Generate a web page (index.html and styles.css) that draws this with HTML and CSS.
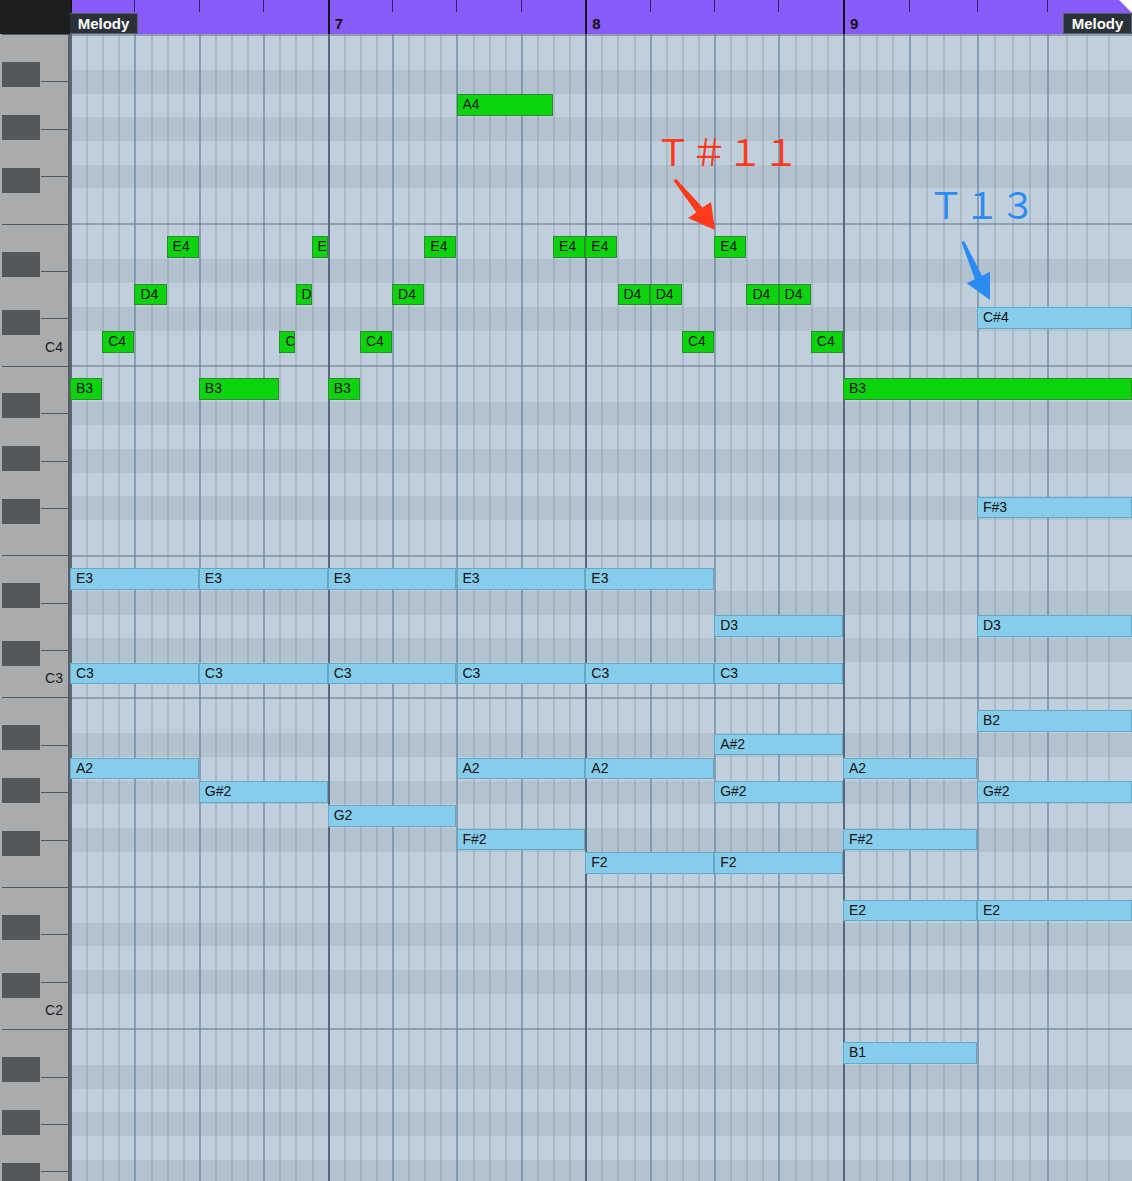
FILE: index.html
```html
<!DOCTYPE html>
<html lang="en">
<head>
    <meta charset="UTF-8">
    <title>Key Editor - Melody</title>
    <link rel="stylesheet" href="styles.css">
</head>
<body>
<div class="editor">
    <div class="corner"></div>

    <!-- ruler: one cell per beat -->
    <div class="ruler">
        <div class="rbeat bar"></div><div class="rbeat"></div><div class="rbeat"></div><div class="rbeat"></div>
        <div class="rbeat bar">7</div><div class="rbeat"></div><div class="rbeat"></div><div class="rbeat"></div>
        <div class="rbeat bar">8</div><div class="rbeat"></div><div class="rbeat"></div><div class="rbeat"></div>
        <div class="rbeat bar w66">9</div><div class="rbeat w68"></div><div class="rbeat w70"></div><div class="rbeat w85"></div>
        <span class="part-tag left">Melody</span>
        <span class="part-tag right">Melody</span>
    </div>

    <!-- keyboard -->
    <div class="keys">
        <div class="wkey full"><div class="bkey as"></div></div>
        <div class="wkey"><div class="bkey gs"></div></div>
        <div class="wkey"><div class="bkey fs"></div></div>
        <div class="wkey"></div>
        <div class="wkey full"><div class="bkey ds"></div></div>
        <div class="wkey"><div class="bkey cs"></div></div>
        <div class="wkey">C4</div>

        <div class="wkey full"><div class="bkey as"></div></div>
        <div class="wkey"><div class="bkey gs"></div></div>
        <div class="wkey"><div class="bkey fs"></div></div>
        <div class="wkey"></div>
        <div class="wkey full"><div class="bkey ds"></div></div>
        <div class="wkey"><div class="bkey cs"></div></div>
        <div class="wkey">C3</div>

        <div class="wkey full"><div class="bkey as"></div></div>
        <div class="wkey"><div class="bkey gs"></div></div>
        <div class="wkey"><div class="bkey fs"></div></div>
        <div class="wkey"></div>
        <div class="wkey full"><div class="bkey ds"></div></div>
        <div class="wkey"><div class="bkey cs"></div></div>
        <div class="wkey">C2</div>

        <div class="wkey full"><div class="bkey as"></div></div>
        <div class="wkey"><div class="bkey gs"></div></div>
        <div class="wkey"><div class="bkey fs"></div></div>
        <div class="wkey"></div>
    </div>

    <div class="grid">
        <div class="rows">
            <div class="row gap"></div><div class="row"></div><div class="row blk"></div><div class="row"></div><div class="row blk"></div><div class="row"></div><div class="row blk"></div><div class="row"></div>
            <div class="row gap"></div><div class="row"></div><div class="row blk"></div><div class="row"></div><div class="row blk"></div><div class="row"></div>
            <div class="row gap"></div><div class="row"></div><div class="row blk"></div><div class="row"></div><div class="row blk"></div><div class="row"></div><div class="row blk"></div><div class="row"></div>
            <div class="row gap"></div><div class="row"></div><div class="row blk"></div><div class="row"></div><div class="row blk"></div><div class="row"></div>
            <div class="row gap"></div><div class="row"></div><div class="row blk"></div><div class="row"></div><div class="row blk"></div><div class="row"></div><div class="row blk"></div><div class="row"></div>
            <div class="row gap"></div><div class="row"></div><div class="row blk"></div><div class="row"></div><div class="row blk"></div><div class="row"></div>
            <div class="row gap"></div><div class="row"></div><div class="row blk"></div><div class="row"></div><div class="row blk"></div><div class="row"></div><div class="row blk"></div>
        </div>

        <div class="cols">
            <div class="gbeat bar"><i></i><i></i><i></i><i></i></div><div class="gbeat"><i></i><i></i><i></i><i></i></div><div class="gbeat"><i></i><i></i><i></i><i></i></div><div class="gbeat"><i></i><i></i><i></i><i></i></div>
            <div class="gbeat bar"><i></i><i></i><i></i><i></i></div><div class="gbeat"><i></i><i></i><i></i><i></i></div><div class="gbeat"><i></i><i></i><i></i><i></i></div><div class="gbeat"><i></i><i></i><i></i><i></i></div>
            <div class="gbeat bar"><i></i><i></i><i></i><i></i></div><div class="gbeat"><i></i><i></i><i></i><i></i></div><div class="gbeat"><i></i><i></i><i></i><i></i></div><div class="gbeat"><i></i><i></i><i></i><i></i></div>
            <div class="gbeat bar w66"><i></i><i></i><i></i><i></i></div><div class="gbeat w68"><i></i><i></i><i></i><i></i></div><div class="gbeat w70"><i></i><i></i><i></i><i></i></div>
            <div class="gbeat w85"><i class="s19"></i><i class="s20"></i><i class="s22"></i><i class="s24"></i></div>
        </div>

        <div class="notes">
            <!-- melody -->
            <div class="note g" style="--r:3;left:386.5px;width:96.6px">A4</div>

            <div class="note g" style="--r:9;left:96.6px;width:32.2px">E4</div>
            <div class="note g" style="--r:9;left:241.6px;width:16.1px">E</div>
            <div class="note g" style="--r:9;left:354.3px;width:32.2px">E4</div>
            <div class="note g" style="--r:9;left:483.1px;width:32.2px">E4</div>
            <div class="note g" style="--r:9;left:515.3px;width:32.2px">E4</div>
            <div class="note g" style="--r:9;left:644.2px;width:32.2px">E4</div>

            <div class="note g" style="--r:11;left:64.4px;width:32.2px">D4</div>
            <div class="note g" style="--r:11;left:225.5px;width:16.1px">D</div>
            <div class="note g" style="--r:11;left:322.1px;width:32.2px">D4</div>
            <div class="note g" style="--r:11;left:547.5px;width:32.2px">D4</div>
            <div class="note g" style="--r:11;left:579.7px;width:32.2px">D4</div>
            <div class="note g" style="--r:11;left:676.4px;width:32.2px">D4</div>
            <div class="note g" style="--r:11;left:708.6px;width:32.2px">D4</div>

            <div class="note g" style="--r:13;left:32.2px;width:32.2px">C4</div>
            <div class="note g" style="--r:13;left:209.4px;width:16.1px">C</div>
            <div class="note g" style="--r:13;left:289.9px;width:32.2px">C4</div>
            <div class="note g" style="--r:13;left:612px;width:32.2px">C4</div>
            <div class="note g" style="--r:13;left:740.8px;width:32.2px">C4</div>

            <div class="note g" style="--r:15;left:0;width:32.2px">B3</div>
            <div class="note g" style="--r:15;left:128.8px;width:80.6px">B3</div>
            <div class="note g" style="--r:15;left:257.7px;width:32.2px">B3</div>
            <div class="note g" style="--r:15;left:773px;width:289px">B3</div>

            <!-- chords -->
            <div class="note b" style="--r:12;left:907px;width:155px">C#4</div>
            <div class="note b" style="--r:20;left:907px;width:155px">F#3</div>

            <div class="note b" style="--r:23;left:0;width:128.8px">E3</div>
            <div class="note b" style="--r:23;left:128.8px;width:128.9px">E3</div>
            <div class="note b" style="--r:23;left:257.7px;width:128.8px">E3</div>
            <div class="note b" style="--r:23;left:386.5px;width:128.8px">E3</div>
            <div class="note b" style="--r:23;left:515.3px;width:128.9px">E3</div>

            <div class="note b" style="--r:25;left:644.2px;width:128.8px">D3</div>
            <div class="note b" style="--r:25;left:907px;width:155px">D3</div>

            <div class="note b" style="--r:27;left:0;width:128.8px">C3</div>
            <div class="note b" style="--r:27;left:128.8px;width:128.9px">C3</div>
            <div class="note b" style="--r:27;left:257.7px;width:128.8px">C3</div>
            <div class="note b" style="--r:27;left:386.5px;width:128.8px">C3</div>
            <div class="note b" style="--r:27;left:515.3px;width:128.9px">C3</div>
            <div class="note b" style="--r:27;left:644.2px;width:128.8px">C3</div>

            <div class="note b" style="--r:29;left:907px;width:155px">B2</div>
            <div class="note b" style="--r:30;left:644.2px;width:128.8px">A#2</div>

            <div class="note b" style="--r:31;left:0;width:128.8px">A2</div>
            <div class="note b" style="--r:31;left:386.5px;width:128.8px">A2</div>
            <div class="note b" style="--r:31;left:515.3px;width:128.9px">A2</div>
            <div class="note b" style="--r:31;left:773px;width:134px">A2</div>

            <div class="note b" style="--r:32;left:128.8px;width:128.9px">G#2</div>
            <div class="note b" style="--r:32;left:644.2px;width:128.8px">G#2</div>
            <div class="note b" style="--r:32;left:907px;width:155px">G#2</div>

            <div class="note b" style="--r:33;left:257.7px;width:128.8px">G2</div>

            <div class="note b" style="--r:34;left:386.5px;width:128.8px">F#2</div>
            <div class="note b" style="--r:34;left:773px;width:134px">F#2</div>

            <div class="note b" style="--r:35;left:515.3px;width:128.9px">F2</div>
            <div class="note b" style="--r:35;left:644.2px;width:128.8px">F2</div>

            <div class="note b" style="--r:37;left:773px;width:134px">E2</div>
            <div class="note b" style="--r:37;left:907px;width:155px">E2</div>

            <div class="note b" style="--r:43;left:773px;width:134px">B1</div>
        </div>

        <!-- hand-drawn annotations -->
        <span class="mark red">Ｔ＃１１</span>
        <span class="mark blue">Ｔ１３</span>
        <svg class="arrows" width="1062" height="1147" viewBox="0 0 1062 1147">
            <path d="M606.2 145 L632.6 173.5 L641 168 L645 196 L618 184 L626.4 178.5 L603.8 147 Q604.5 145.2 606.2 145 Z" fill="#ff3a1c"/>
            <path d="M894.4 207.4 L912.1 241.8 L920 237.7 L920 266 L896.7 249.3 L904.9 245.2 L891.6 208.6 Q892.8 206.8 894.4 207.4 Z" fill="#2a8cf2"/>
        </svg>
    </div>
</div>
</body>
</html>
```

FILE: styles.css
```css
* {
    box-sizing: border-box;
}

body {
    margin: 0;
    overflow: hidden;
    background-color: #1c1e20;
    font-family: "Liberation Sans", Arial, sans-serif;
}

.editor {
    display: grid;
    grid-template-columns: 70px 1062px;
    grid-template-rows: 34px 1147px;
    width: 1132px;
    height: 1181px;
    overflow: hidden;
}

.corner {
    background-color: #1c1e20;
}

/* ruler */
.ruler {
    position: relative;
    display: flex;
    background-color: #885cfc;
    overflow: hidden;
}

.rbeat {
    flex: 0 0 64.42px;
    background: linear-gradient(#2e2560, #2e2560) no-repeat left top / 1px 12px;
}

.rbeat.bar {
    background: linear-gradient(#151515, #151515) no-repeat left top / 2px 100%;
    padding: 16px 0 0 7px;
    font-size: 15px;
    line-height: 15px;
    font-weight: bold;
    color: #111;
}

.part-tag {
    position: absolute;
    bottom: 0;
    width: 69px;
    height: 21px;
    background-color: #2a3139;
    border: 1px solid #56616b;
    color: #fff;
    font-size: 15px;
    line-height: 19px;
    font-weight: bold;
    text-align: center;
}

.part-tag.left { left: -1px; }
.part-tag.right { right: 0; }

.ruler::after {
    content: "";
    position: absolute;
    top: 0;
    right: 0;
    border-top: 13px solid #fff;
    border-left: 13px solid transparent;
}

/* keyboard */
.keys {
    background-color: #aaabac;
    border-right: 2px solid #5b5d5f;
    overflow: hidden;
}

.wkey {
    position: relative;
    height: 47.4px;
    display: flex;
    justify-content: flex-end;
    align-items: flex-end;
    padding: 0 5px 11px 0;
    font-size: 14px;
    line-height: 15px;
    color: #1b1b1b;
    background: linear-gradient(#55585a, #55585a) no-repeat right top / 27px 1px;
}

.wkey.full {
    background-size: 66px 1px;
}

.bkey {
    position: absolute;
    left: 2px;
    width: 38px;
    height: 25px;
    background-color: #55585a;
    z-index: 1;
}

.bkey.as { top: 27.6px; }
.bkey.gs { top: 33.2px; }
.bkey.fs { top: 38.8px; }
.bkey.ds { top: 28px; }
.bkey.cs { top: 38.6px; }

/* note grid */
.grid {
    position: relative;
    overflow: hidden;
}

.rows {
    margin-top: -11.4px;
}

.row {
    height: 23.7px;
    background-color: #c0cfdc;
}

.row.blk {
    background-color: #b2c2cf;
}

.row.gap {
    background: linear-gradient(#8e9fae, #8e9fae) no-repeat 0 11px / 100% 2px, #c0cfdc;
}

.cols {
    position: absolute;
    inset: 0;
    display: flex;
}

.gbeat {
    flex: 0 0 64.42px;
    display: flex;
    border-left: 2px solid rgba(100, 125, 150, 0.6);
}

.gbeat.bar {
    border-left-color: rgba(70, 88, 109, 0.85);
}

.gbeat i {
    flex: 1;
    border-left: 2px solid rgba(110, 135, 160, 0.28);
}

.gbeat i:first-child {
    border-left: none;
}

.gbeat i.s19 { flex: 19; }
.gbeat i.s20 { flex: 20; }
.gbeat i.s22 { flex: 22; }
.gbeat i.s24 { flex: 24; }

/* stretched beats of the last bar, shared by ruler and grid */
.w66 { flex-basis: 66px; }
.w68 { flex-basis: 68px; }
.w70 { flex-basis: 70px; }
.w85 { flex-basis: 85px; }

.notes {
    position: absolute;
    inset: 0;
}

.note {
    position: absolute;
    top: calc(var(--r) * 23.7px - 11.1px);
    height: 21.5px;
    padding-left: 5px;
    border: 1px solid;
    font-size: 14px;
    line-height: 19.5px;
    color: #111;
    white-space: nowrap;
    overflow: hidden;
}

.note.g {
    background-color: #0cd40c;
    border-color: #2e8a2e;
}

.note.b {
    background-color: #86cdec;
    border-color: #64a8c8;
}

/* annotations */
.mark {
    position: absolute;
    font-family: "Noto Sans CJK JP", sans-serif;
    font-weight: 400;
    font-size: 36px;
    line-height: 36px;
    white-space: nowrap;
}

.mark.red {
    left: 585px;
    top: 98px;
    color: #ff3a1c;
}

.mark.blue {
    left: 858px;
    top: 151px;
    color: #2a8cf2;
}

.arrows {
    position: absolute;
    left: 0;
    top: 0;
}
```
